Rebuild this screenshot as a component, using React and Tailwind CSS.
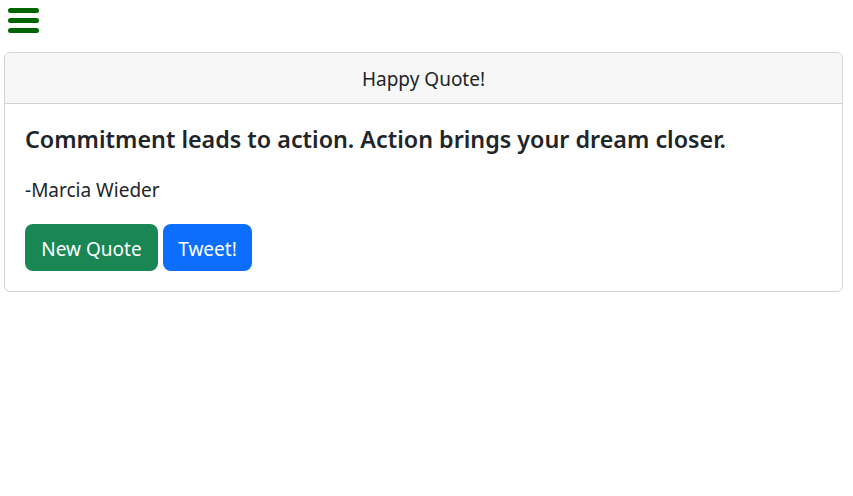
import React, { useState } from 'react'

const quotes = [
  { text: 'Commitment leads to action. Action brings your dream closer.', author: 'Marcia Wieder' },
]

const App = () => {
  const [idx, setIdx] = useState(0)
  const quote = quotes[idx]

  return (
    <div className="min-h-screen bg-white text-[#212529] font-['Noto_Sans',sans-serif]">
      {/* Menu */}
      <div className="h-[52px] pl-2 pt-2">
        <button className="flex flex-col gap-[5.5px] w-[31px]" aria-label="menu">
          <span className="block h-[4.5px] w-full rounded-full bg-[#006400]"></span>
          <span className="block h-[4.5px] w-full rounded-full bg-[#006400]"></span>
          <span className="block h-[4.5px] w-full rounded-full bg-[#006400]"></span>
        </button>
      </div>

      {/* Quote card */}
      <div className="ml-1 mr-[10px] border border-[#d3d3d3] rounded-[6px] overflow-hidden">
        <div className="h-[51px] pt-[2px] flex items-center justify-center bg-[#f7f7f7] border-b border-[#d3d3d3] text-[19px]">
          Happy Quote!
        </div>
        <div className="p-5">
          <h4 className="text-[23.3px] leading-[30px] font-semibold mb-5">{quote.text}</h4>
          <p className="text-[19px] leading-[30px] pt-[1px] mb-[19px]">-{quote.author}</p>
          <div className="flex gap-[5px]">
            <button
              onClick={() => setIdx((idx + 1) % quotes.length)}
              className="h-[47px] w-[133px] pt-[3px] rounded-lg bg-[#198754] text-white text-[19px]"
            >
              New Quote
            </button>
            <button className="h-[47px] w-[89px] pt-[3px] rounded-lg bg-[#0d6efd] text-white text-[19px]">
              Tweet!
            </button>
          </div>
        </div>
      </div>
    </div>
  )
}

export default App
